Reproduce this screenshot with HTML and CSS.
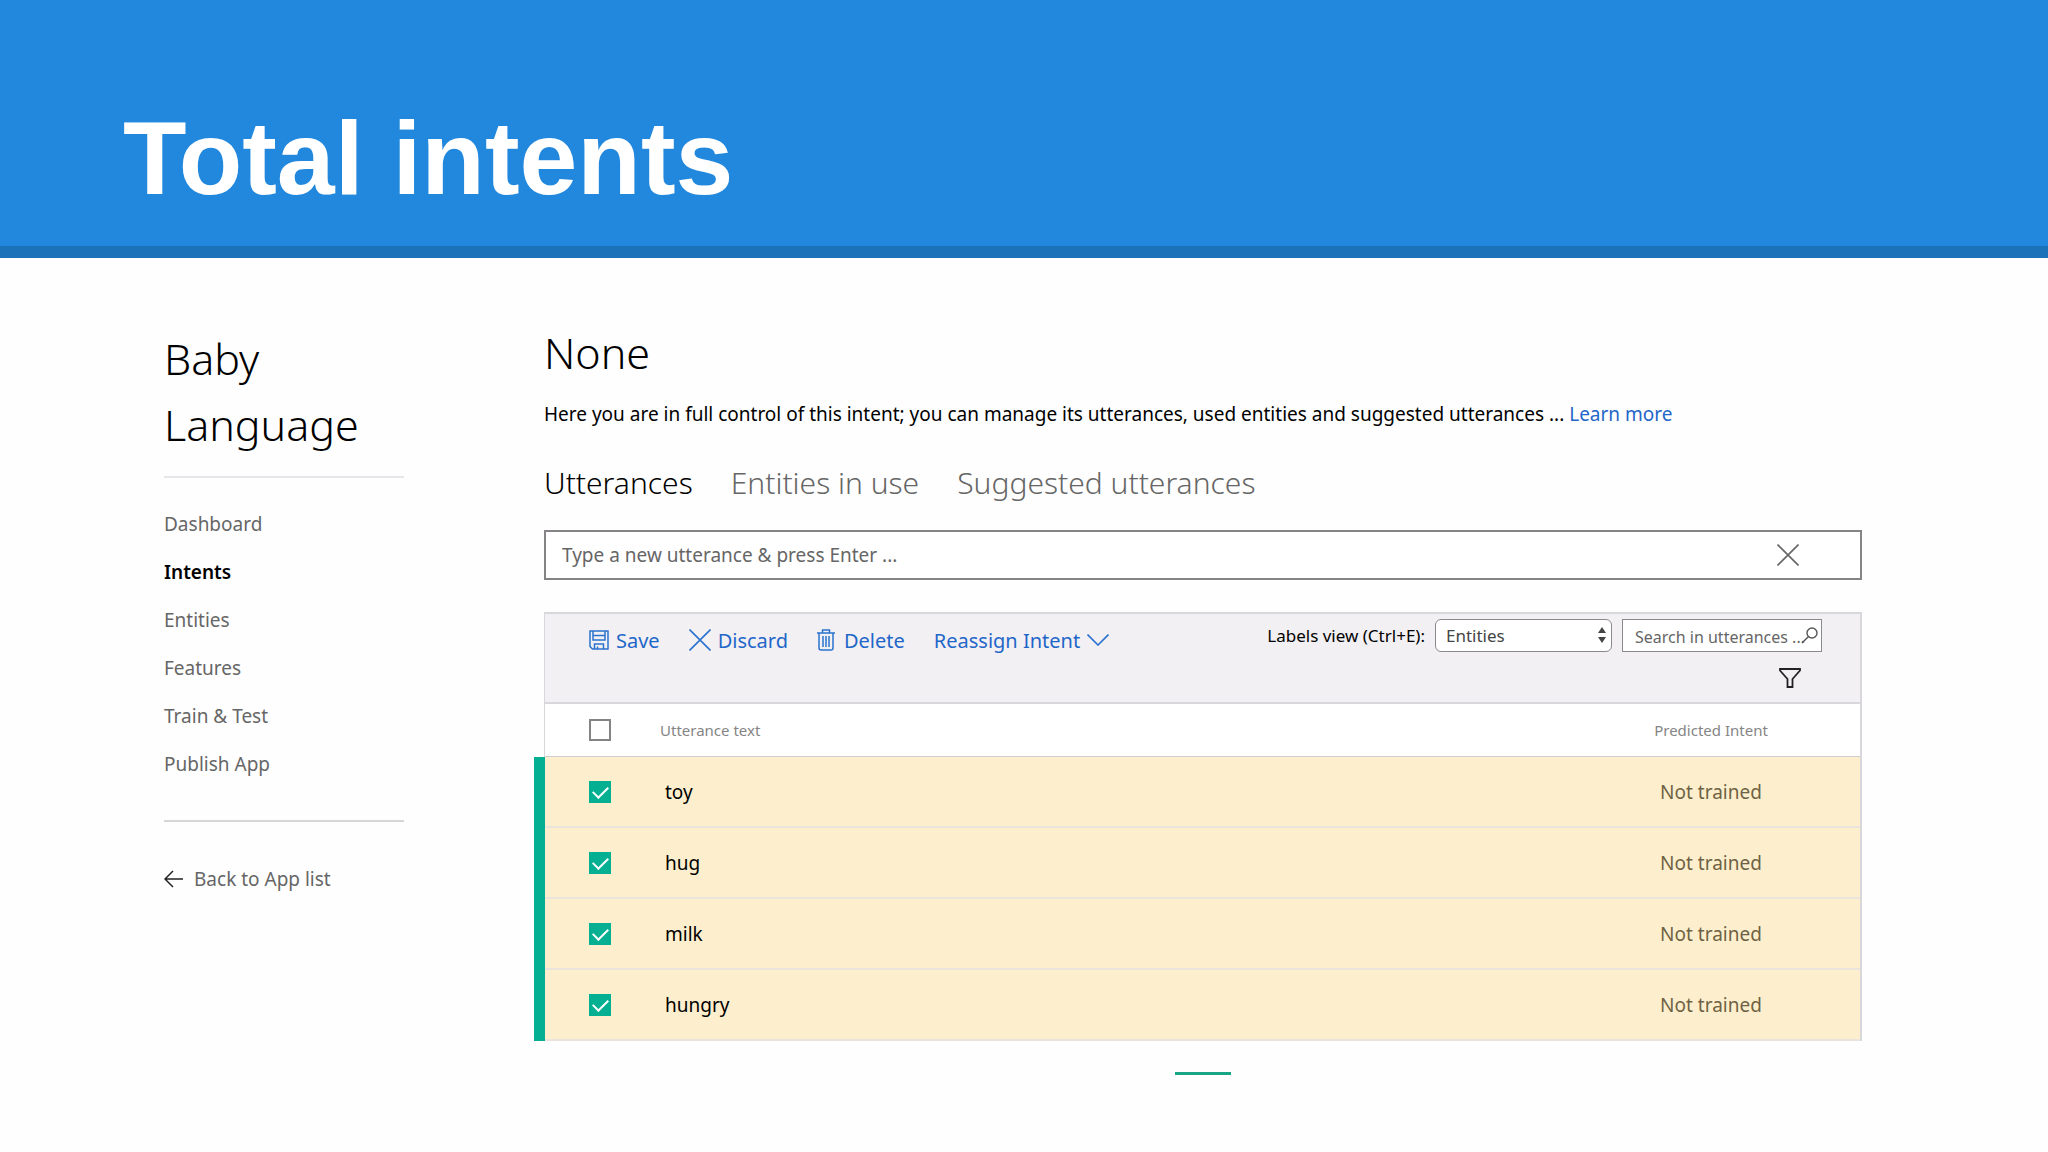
FILE: index.html
```
<!DOCTYPE html>
<html lang="en">
<head>
  <meta charset="utf-8">
  <title>Total intents</title>
  <link rel="stylesheet" href="styles.css">
</head>

<body>

  <header class="banner">
    <h1>Total intents</h1>
  </header>

  <div class="page">

    <aside class="sidebar">
      <h2>Baby Language</h2>
      <nav class="menu">
        <a href="#">Dashboard</a>
        <a href="#" class="active">Intents</a>
        <a href="#">Entities</a>
        <a href="#">Features</a>
        <a href="#">Train &amp; Test</a>
        <a href="#">Publish App</a>
      </nav>
      <a href="#" class="back">
        <svg width="20" height="18" viewBox="0 0 20 18" fill="none" stroke="#222" stroke-width="1.5"><path d="M19 9H1M9 1L1 9l8 8"/></svg>
        Back to App list
      </a>
    </aside>

    <main class="content">
      <h2>None</h2>
      <p class="description">Here you are in full control of this intent; you can manage its utterances, used entities and suggested utterances ... <a href="#">Learn more</a></p>

      <nav class="tabs">
        <a href="#" class="active">Utterances</a>
        <a href="#">Entities in use</a>
        <a href="#">Suggested utterances</a>
      </nav>

      <div class="new-utterance">
        <input type="text" aria-label="New utterance" placeholder="Type a new utterance &amp; press Enter ...">
        <button type="button" aria-label="Clear">
          <svg width="22" height="22" viewBox="0 0 22 22" fill="none" stroke="#666" stroke-width="1.6"><path d="M0.5 0.5l21 21M21.5 0.5l-21 21"/></svg>
        </button>
      </div>

      <section class="panel">
        <div class="toolbar">
          <div class="actions">
            <button type="button">
              <svg width="20" height="20" viewBox="0 0 20 20" fill="none" stroke="#2b73cf" stroke-width="1.5"><path d="M1 1h18v18H3.500L1 16.500zM4 1v9h12V1M4 5.500h12M5.500 19v-5h9v5M8.500 19v-2.500"/></svg>
              Save
            </button>
            <button type="button">
              <svg width="22" height="22" viewBox="0 0 22 22" fill="none" stroke="#2b73cf" stroke-width="1.6"><path d="M0.5 0.5l21 21M21.5 0.5l-21 21"/></svg>
              Discard
            </button>
            <button type="button" class="delete">
              <svg width="18" height="22" viewBox="0 0 18 22" fill="none" stroke="#2b73cf" stroke-width="1.5"><path d="M0 4h18M5.5 4V1h7v3M2 4v15q0 2 2 2h10q2 0 2-2V4M6 7v11M9 7v11M12 7v11"/></svg>
              Delete
            </button>
            <button type="button">
              Reassign Intent
              <svg width="22" height="12" viewBox="0 0 22 12" fill="none" stroke="#2b73cf" stroke-width="1.6"><path d="M0.5 0.5L11 11 21.5 0.5"/></svg>
            </button>
          </div>

          <div class="view">
            <div class="filters">
              <label for="labels-view">Labels view (Ctrl+E):</label>
              <div class="select">
                <select id="labels-view">
                  <option>Entities</option>
                </select>
                <svg width="8" height="16" viewBox="0 0 8 16" fill="#444"><path d="M4 0l4 6H0zM4 16l4-6H0z"/></svg>
              </div>
              <div class="search">
                <input type="text" aria-label="Search in utterances" placeholder="Search in utterances ...">
                <svg width="17" height="17" viewBox="0 0 17 17" fill="none" stroke="#555" stroke-width="1.4"><circle cx="11" cy="6" r="5"/><path d="M7.5 9.5L1 16"/></svg>
              </div>
            </div>
            <button type="button" class="funnel" aria-label="Filter">
              <svg width="22" height="20" viewBox="0 0 22 20" fill="none" stroke="#222" stroke-width="1.8"><path d="M1 1h20v1.5L13.500 11v8h-5v-8L1 2.500z"/></svg>
            </button>
          </div>
        </div>

        <table>
          <thead>
            <tr>
              <th><input type="checkbox" aria-label="Select all"></th>
              <th>Utterance text</th>
              <th class="predicted">Predicted Intent</th>
            </tr>
          </thead>
          <tbody>
            <tr>
              <td><input type="checkbox" aria-label="toy" checked></td>
              <td>toy</td>
              <td class="predicted">Not trained</td>
            </tr>
            <tr>
              <td><input type="checkbox" aria-label="hug" checked></td>
              <td>hug</td>
              <td class="predicted">Not trained</td>
            </tr>
            <tr>
              <td><input type="checkbox" aria-label="milk" checked></td>
              <td>milk</td>
              <td class="predicted">Not trained</td>
            </tr>
            <tr>
              <td><input type="checkbox" aria-label="hungry" checked></td>
              <td>hungry</td>
              <td class="predicted">Not trained</td>
            </tr>
          </tbody>
        </table>
      </section>

      <!-- current page marker under the table -->
      <div class="pager"></div>
    </main>

  </div>

</body>
</html>
```
FILE: styles.css
```
*{
  box-sizing: border-box;
  padding: 0;
  margin: 0;
}

body{
  background-color: #fefefe;
  font-family: "Noto Sans", "Open Sans", sans-serif;
  font-size: 19px;
  color: #000;
}

a{
  color: #666;
  text-decoration: none;
}

svg{
  flex: none;
}

button, input, select{
  font-family: inherit;
  font-size: inherit;
  color: inherit;
}

button{
  background: none;
  border: none;
}

h2{
  font-size: 43px;
  font-weight: 300;
  line-height: 66px;
}

.banner{
  padding: 99px 6% 28px;
  background-color: #2288dd;
  border-bottom: 12px solid #1c72b9;
}

.banner h1{
  font-family: "Liberation Sans", Arial, sans-serif;
  font-size: 104px;
  line-height: 119px;
  color: #fff;
}

.page{
  display: flex;
  gap: 140px;
  padding: 62px 186px 0 164px;
}

/* sidebar */
.sidebar{
  width: 240px;
  flex: none;
  padding-top: 6px;
}

.menu{
  display: flex;
  flex-direction: column;
  margin-top: 18px;
  padding: 22px 0 32px;
  border-top: 2px solid #e6e5e9;
  border-bottom: 2px solid #d6d6d8;
}

.menu a, .back{
  line-height: 48px;
}

.menu .active{
  font-weight: 600;
  color: #000;
}

.back{
  display: flex;
  align-items: center;
  gap: 10px;
  margin-top: 33px;
}

/* main column */
.content{
  flex: 1;
}

.description{
  margin-top: 13px;
  line-height: 30px;
}

.description a{
  color: #1f66c9;
}

.tabs{
  display: flex;
  gap: 38px;
  margin-top: 30px;
  font-size: 30px;
  font-weight: 350;
  line-height: 48px;
}

.tabs .active{
  color: #000;
}

.new-utterance{
  display: flex;
  align-items: center;
  height: 50px;
  margin-top: 23px;
  padding: 0 61px 0 16px;
  background-color: #fff;
  border: 2px solid #858386;
}

.new-utterance input{
  flex: 1;
  border: none;
  background: none;
}

.new-utterance button{
  display: flex;
}

::placeholder{
  color: #666;
  opacity: 1;
}

.panel{
  margin-top: 32px;
  background-color: #fff;
  border: 1px solid #d8d7db;
  border-top-width: 2px;
  border-right-width: 2px;
  border-bottom: none;
}

.toolbar{
  display: flex;
  justify-content: space-between;
  height: 90px;
  padding: 5px 38px 0 44px;
  background-color: #f2f0f3;
  border-bottom: 2px solid #d8d7db;
}

.actions{
  display: flex;
  align-items: center;
  gap: 29px;
  height: 42px;
  font-size: 20px;
  color: #1f66c9;
}

.actions button{
  display: flex;
  align-items: center;
  gap: 7px;
}

.actions .delete{
  gap: 9px;
}

.view{
  display: flex;
  flex-direction: column;
  align-items: flex-end;
  gap: 16px;
  font-size: 17px;
}

.filters{
  display: flex;
  align-items: center;
  gap: 10px;
}

.select, .search{
  position: relative;
}

.select select{
  display: block;
  width: 177px;
  height: 33px;
  padding: 0 10px;
  appearance: none;
  background-color: #fff;
  border: 1px solid #8a898c;
  border-radius: 6px;
  color: #444;
}

.select svg{
  position: absolute;
  top: 8px;
  right: 6px;
}

.search input{
  display: block;
  width: 200px;
  height: 33px;
  padding: 2px 0 0 12px;
  background-color: #fff;
  border: 1px solid #8a898c;
  font-size: 16px;
}

.search svg{
  position: absolute;
  top: 8px;
  right: 4px;
}

.funnel{
  display: flex;
  margin-right: 21px;
}

/* utterances table */
table{
  width: 100%;
  border-spacing: 0;
  table-layout: fixed;
}

th{
  height: 53px;
  border-bottom: 1px solid #d0ced0;
  font-size: 15px;
  font-weight: 400;
  text-align: left;
  color: #858585;
}

td{
  height: 71px;
  padding-left: 5px;
  background-color: #fdefcd;
  border-bottom: 2px solid #ebe4dc;
}

th:first-child, td:first-child{
  width: 115px;
  padding-left: 44px;
}

/* green bar beside the selected rows */
td:first-child{
  box-shadow: -11px 0 0 #04af92;
}

th.predicted, td.predicted{
  width: 298px;
  padding-left: 0;
  text-align: center;
}

td.predicted{
  color: #6f6244;
}

input[type="checkbox"]{
  display: block;
  position: relative;
  width: 22px;
  height: 22px;
  appearance: none;
  border: 2px solid #858386;
}

input[type="checkbox"]:checked{
  background-color: #04af92;
  border-color: #04af92;
}

input[type="checkbox"]:checked::after{
  content: "";
  position: absolute;
  left: 5px;
  top: 0;
  width: 7px;
  height: 13px;
  border: solid #fff;
  border-width: 0 2px 2px 0;
  transform: rotate(45deg);
}

.pager{
  width: 56px;
  height: 3px;
  margin: 31px auto 0;
  background-color: #1ba587;
}
```
